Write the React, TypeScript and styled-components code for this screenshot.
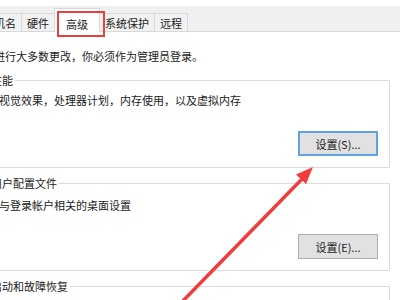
import React from "react";
import styled, { createGlobalStyle } from "styled-components";

const GlobalStyle = createGlobalStyle`
  body {
    margin: 0;
    background: #fff;
  }
`;

// whole shot, the dialog runs off the left edge
const Root = styled.div`
  position: relative;
  width: 400px;
  height: 300px;
  overflow: hidden;
  background: #fff;
  font-family: "Noto Sans CJK SC", "Noto Sans", sans-serif;
  font-size: 11px;
  color: #1b1b1b;
`;

const Dialog = styled.div`
  width: 440px;
  margin-left: -40px;
`;

const TabBar = styled.div`
  display: flex;
  align-items: flex-end;
  box-sizing: border-box;
  height: 26px;
  margin-top: 6px;
  padding-left: 6px;
  background: #f0f0f0;
  border-bottom: 1px solid #d9d9d9;
`;

const Tab = styled.div<{ $active?: boolean }>`
  position: relative;
  display: flex;
  align-items: center;
  box-sizing: border-box;
  height: ${(p) => (p.$active ? "24px" : "18px")};
  padding: ${(p) => (p.$active ? "6px 11px 0" : "0 5px")};
  margin-right: -1px;
  margin-bottom: ${(p) => (p.$active ? "-1px" : "0")};
  border: 1px solid #d9d9d9;
  border-bottom: none;
  background: ${(p) => (p.$active ? "#fff" : "#f2f2f2")};
  z-index: ${(p) => (p.$active ? 1 : 0)};
  white-space: nowrap;
`;

// red annotation box drawn over the active tab
const Highlight = styled.span`
  position: absolute;
  left: 2px;
  top: 2px;
  width: 48px;
  height: 26px;
  box-sizing: border-box;
  border: 2px solid #e8403f;
`;

const Page = styled.div`
  padding: 16px 10px 0 23px;
`;

const Notice = styled.div`
  line-height: 16px;
  white-space: nowrap;
`;

const GroupBox = styled.fieldset<{ $gap: number; $height?: number }>`
  margin: ${(p) => p.$gap}px 0 0;
  padding: 0 11px 11px 15px;
  min-width: 0;
  border: 1px solid #dcdcdc;
  ${(p) => (p.$height ? `height: ${p.$height}px;` : "")}
`;

const Legend = styled.legend`
  margin-left: -10px;
  padding: 0 2px;
  line-height: 14px;
  font-size: 11px;
`;

const Desc = styled.div<{ $top: number }>`
  margin-top: ${(p) => p.$top}px;
  line-height: 16px;
  white-space: nowrap;
`;

const ButtonRow = styled.div<{ $top: number }>`
  display: flex;
  justify-content: flex-end;
  margin-top: ${(p) => p.$top}px;
`;

const Button = styled.div<{ $default?: boolean }>`
  display: flex;
  align-items: center;
  justify-content: center;
  box-sizing: border-box;
  width: 80px;
  height: 25px;
  background: #e1e1e1;
  border: ${(p) => (p.$default ? "2px solid #5ea3e0" : "1px solid #adadad")};
  font-size: 11px;
  color: #1b1b1b;
`;

const Arrow = styled.svg`
  position: absolute;
  left: 0;
  top: 0;
  pointer-events: none;
`;

const tabs = ["计算机名", "硬件", "高级", "系统保护", "远程"];

export default function App() {
  return (
    <Root>
      <GlobalStyle />
      <Dialog>
        <TabBar>
          {tabs.map((t) => (
            <Tab key={t} $active={t === "高级"}>
              {t}
              {t === "高级" && <Highlight />}
            </Tab>
          ))}
        </TabBar>
        <Page>
          <Notice>要进行大多数更改，你必须作为管理员登录。</Notice>

          <GroupBox $gap={9}>
            <Legend>性能</Legend>
            <Desc $top={5}>视觉效果，处理器计划，内存使用，以及虚拟内存</Desc>
            <ButtonRow $top={23}>
              <Button $default>设置(S)...</Button>
            </ButtonRow>
          </GroupBox>

          <GroupBox $gap={8}>
            <Legend>用户配置文件</Legend>
            <Desc $top={7}>与登录帐户相关的桌面设置</Desc>
            <ButtonRow $top={21}>
              <Button>设置(E)...</Button>
            </ButtonRow>
          </GroupBox>

          <GroupBox $gap={8} $height={60}>
            <Legend>启动和故障恢复</Legend>
          </GroupBox>
        </Page>
      </Dialog>

      <Arrow width="400" height="300" viewBox="0 0 400 300">
        <line x1="176" y1="308" x2="303" y2="178" stroke="#f03c3c" strokeWidth="3.5" strokeLinecap="round" />
        <polygon points="313,167 296,174.5 306,184" fill="#f03c3c" />
      </Arrow>
    </Root>
  );
}
